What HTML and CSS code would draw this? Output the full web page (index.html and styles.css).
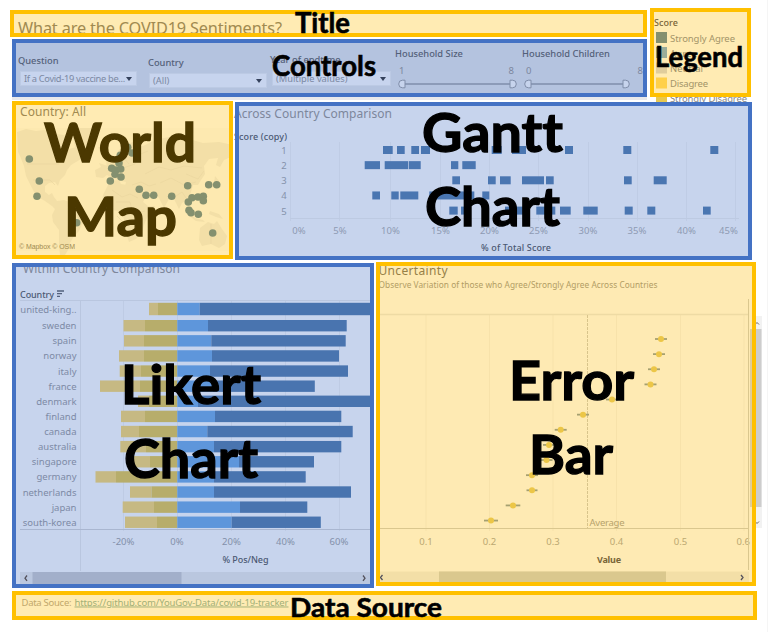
FILE: index.html
```html
<!DOCTYPE html>
<html lang="en">
<head>
<meta charset="utf-8">
<title>COVID19 Sentiments dashboard layout</title>
<link rel="stylesheet" href="styles.css">
</head>
<body>
<main class="page">
  <div class="row top">
    <div class="heading">
      <section class="panel yellow title">
        <svg class="art" viewBox="10 10 637 27"><text x="18" y="33.5" class="t16 tan" textLength="264">What are the COVID19 Sentiments?</text></svg>
        <svg class="caption small" viewBox="10 10 637 27"><text x="295" y="33" font-size="28" textLength="55" lengthAdjust="spacingAndGlyphs">Title</text></svg>
      </section>
      <section class="panel blue controls">
        <div class="control question"><label>Question</label><div class="select"><span>If a Covid-19 vaccine be...</span><i></i></div></div>
        <div class="control country"><label>Country</label><div class="select"><span>(All)</span><i></i></div></div>
        <div class="control year"><label>Year of endtime</label><div class="select"><span>(Multiple values)</span><i></i></div></div>
        <div class="control size"><label>Household Size</label><div class="ends"><span>1</span><span>8</span></div>
          <svg class="slider" viewBox="0 0 124 10"><path d="M10 5H115" class="track"/><path d="M10 1.2v7.6H7.5a3.8 3.8 0 0 1 0-7.6zM115 1.2v7.6h2.5a3.8 3.8 0 0 0 0-7.6z" class="knob"/></svg></div>
        <div class="control children"><label>Household Children</label><div class="ends"><span>0</span><span>8</span></div>
          <svg class="slider" viewBox="0 0 124 10"><path d="M10 5H102" class="track"/><path d="M10 1.2v7.6H7.5a3.8 3.8 0 0 1 0-7.6zM102 1.2v7.6h2.5a3.8 3.8 0 0 0 0-7.6z" class="knob"/></svg></div>
        <svg class="caption small" viewBox="12 39 635 58"><text x="272" y="75.500" font-size="28.500" textLength="104" lengthAdjust="spacingAndGlyphs">Controls</text></svg>
      </section>
    </div>
    <section class="panel yellow legend">
      <svg class="art" viewBox="650 8 101 89">
        <text x="654" y="26" class="semi brown" font-size="9" textLength="24">Score</text>
        <g font-size="9.500" fill="#a39468">
          <rect x="656" y="32" width="11" height="11" fill="#85906f"/><text x="670" y="41.500" textLength="65">Strongly Agree</text>
          <rect x="656" y="47" width="11" height="11" fill="#9bad99"/><text x="670" y="56.500" textLength="27">Agree</text>
          <rect x="656" y="62.500" width="11" height="11" fill="#e0cd9c"/><text x="670" y="71.500" textLength="33">Neutral</text>
          <rect x="656" y="77.500" width="11" height="11" fill="#ffd04a"/><text x="670" y="87" textLength="38">Disagree</text>
          <rect x="656" y="93" width="11" height="9" fill="#e8c84e"/><text x="670" y="102" fill="#858585" textLength="77">Strongly Disagree</text>
        </g>
      </svg>
      <svg class="caption small" viewBox="650 8 101 89"><text x="655" y="66.500" font-size="28.500" textLength="88" lengthAdjust="spacingAndGlyphs">Legend</text></svg>
    </section>
  </div>
  <div class="row middle">
    <section class="panel yellow map">
      <svg class="art" viewBox="12 101 221 158">
        <text x="20" y="116" class="tan" font-size="12" textLength="66">Country: All</text>
        <rect x="16" y="128" width="213" height="123" fill="#fde9b0"/>
        <g class="land">
          <path d="M17 132l9-3 10 2 8-1 12 4 8 1 6 6-5 3 4 5 7-2 5 7 2 4-7 4-5 3-4 5-2 5-5 5-2 6-3-4-6 1-4 3 0 6 4 3 3-2 2 4 3 4 7-1 10 4 3 6 8 3 1 5-4 6-3 7-5 5-4 7-2 7-3 5-5 0-1-10 0-15-6-8-1-7 3-6-3-3-7-5-9-5-4-8-6-12-2-10-4-10-2-4z"/>
          <path d="M65 130l12-2h17l6 3-5 8-7 5-8 7-5-4-2-9zM98 147l7 0 1 4-6 1z"/>
          <path d="M108 166l5-3 4-6 1-6 6-6 9-3 10 4 12-6 14-3 20 2 14 4 16-1 14 3v11l-9 4-4 7-4-2 2-7-9 1-5 7 1 8-4 6-3 5-5 0-2 7-3 7-6 4-3 6-3-6-3-6-4 2-5 9-5-10-4-6-9 0-5-5 5 9-3 6-8 5-7-13-3-8 1-4-8-2-6-2-5-3-4 3-7-1-1-7 6-3-2-4z"/>
          <path d="M110 181l9-1 2 4 12 2 6 5 4 11 5 4 7 0-8 12-3 7-2 7-6 7-7 3-4-12-1-11-4-8-11-1-7-7 1-8 4-8z"/>
          <path d="M200 228l8-6 6 2 3-3 5 8 5 7-2 8-6 4-8-4-9 2-3-6zM188 211l7 7 8 2 2 2-9-1-8-6zM210 211l9 3 4 5-7-2-7-3zM106 160l4 0 2 7-5 2zM215 176l4 5-2 4-3-2zM151 217l2 4-3 6-2-5z"/>
        </g>
        <path class="borders" d="M27 164h32M33 180h17l5 5M80 206l-3 9 6 9M112 190l10 7 8-3 8 4M116 202h14l3 12 12-3M123 168l12-4 3-9 10-4M145 174l14-7 12 3 13-4 18 2M160 183l11-5 13 7 12-3M132 185l9-3 8 4 7-2M176 196l6-4 4 6M211 224v20M117 216l8 8 13-1M122 156l7 8M186 174l12 5 6-8M78 222l-7-6 0-8"/>
        <g id="places" fill="#84906f"></g>
        <text x="19" y="248.500" font-size="7" class="tan arial" textLength="56">© Mapbox © OSM</text>
      </svg>
      <svg class="caption umber" viewBox="12 101 221 158"><text x="44" y="162" font-size="54" textLength="152" lengthAdjust="spacingAndGlyphs">World</text><text x="64" y="235.500" font-size="54" textLength="113" lengthAdjust="spacingAndGlyphs">Map</text></svg>
    </section>
    <section class="panel blue gantt">
      <svg class="art" viewBox="235 102 517 158">
        <text x="234" y="117.500" fill="#7d879c" font-size="12" textLength="158">Across Country Comparison</text>
        <text x="234" y="139.500" class="semi slate" font-size="9" textLength="53">Score (copy)</text>
        <g id="gantt" font-size="9.500"></g>
        <text x="481" y="251" class="semi slate" font-size="9" textLength="70">% of Total Score</text>
      </svg>
      <svg class="caption" viewBox="235 102 517 158"><text x="422" y="152" font-size="54" textLength="141" lengthAdjust="spacingAndGlyphs">Gantt</text><text x="425" y="226" font-size="54" textLength="135" lengthAdjust="spacingAndGlyphs">Chart</text></svg>
    </section>
  </div>
  <div class="row bottom">
    <section class="panel blue likert">
      <svg class="art" viewBox="12 263 362 325">
        <text x="23" y="273" fill="#7d879c" font-size="12" textLength="157">Within Country Comparison</text>
        <text x="20" y="297.500" class="semi slate" font-size="9" textLength="34">Country</text>
        <path d="M57 291h7M57 293.700h5M57 296.400h3" stroke="#53617d" stroke-width="1.300"/>
        <g id="likert" font-size="9.500"></g>
        <text x="222.500" y="563" class="semi slate" font-size="9" textLength="46">% Pos/Neg</text>
        <path fill="#bac7df" d="M20 572h350v12H20z"/><path fill="#a2afca" d="M32.500 572h149v12h-149z"/>
        <path d="M27 575.500l-2 2.700 2 2.700M363 575.500l2 2.700-2 2.700" class="chev"/>
      </svg>
      <svg class="caption" viewBox="12 263 362 325"><text x="121" y="404" font-size="54" textLength="140" lengthAdjust="spacingAndGlyphs">Likert</text><text x="124" y="477.500" font-size="54" textLength="134" lengthAdjust="spacingAndGlyphs">Chart</text></svg>
    </section>
    <section class="panel yellow error">
      <svg class="art" viewBox="376 262 380 324">
        <path fill="#f2f2f2" d="M750 316h12v212h-12z"/><path fill="#cdcdcd" d="M750 329h11.500v178H750z"/>
        <path fill="#feeab3" d="M376 262h380v324H376z"/><path fill="#dfcd98" d="M750 329h6v178h-6z"/>
        <path d="M755 324.500l2-2 2 2M755 521.500l2 2 2-2" fill="none" stroke="#666"/>
        <text x="378.500" y="274.500" fill="#968047" font-size="12" textLength="69">Uncertainty</text>
        <text x="378.500" y="288" fill="#b29d64" font-size="8.300" textLength="279">Observe Variation of those who Agree/Strongly Agree Across Countries</text>
        <g id="error" font-size="9.500"></g>
        <text x="589.500" y="525.500" fill="#b7a36c" font-size="9.500" textLength="35">Average</text>
        <text x="597" y="562.500" class="bold brown" font-size="9" textLength="24">Value</text>
        <path fill="#f3dfa7" d="M380 571.500h369v11H380z"/><path fill="#dac88e" d="M439 571.500h227v11H439z"/>
        <path d="M382.500 575l-2 2.500 2 2.500M741 575l2 2.500-2 2.500" class="chev"/>
      </svg>
      <svg class="caption" viewBox="376 262 380 324"><text x="509" y="400" font-size="54" textLength="125" lengthAdjust="spacingAndGlyphs">Error</text><text x="529" y="473.500" font-size="54" textLength="84" lengthAdjust="spacingAndGlyphs">Bar</text></svg>
    </section>
  </div>
  <footer class="panel yellow source">
    <svg class="art" viewBox="12 591 745 29"><text x="21.500" y="605.500" fill="#c2a86b" font-size="9.500" textLength="50">Data Souce:</text><a href="https://github.com/YouGov-Data/covid-19-tracker"><text x="74.500" y="605.500" fill="#a2b077" font-size="9.500" textLength="214" text-decoration="underline">https://github.com/YouGov-Data/covid-19-tracker</text></a></svg>
    <svg class="caption small" viewBox="12 591 745 29"><text x="290" y="617" font-size="27" textLength="152" lengthAdjust="spacingAndGlyphs">Data Source</text></svg>
  </footer>
</main>
<script src="charts.js"></script>
</body>
</html>
```
FILE: styles.css
```css
* { box-sizing: border-box; }
body { margin: 0; background: #fff; font-family: "Noto Sans", "Open Sans", sans-serif; }
.page { width: 768px; height: 632px; padding: 8px 0 0 12px; border-right: 1px solid #f5f5f5; overflow: hidden; }
.row { display: flex; align-items: flex-start; }
.panel { position: relative; }
.panel::after { content: ""; position: absolute; inset: 0; border: 4px solid; pointer-events: none; }
.yellow { background: #ffebb3; }
.yellow::after { border-color: #ffc000; }
.blue { background: #c7d4ed; }
.blue::after { border-color: #4472c4; }
.art { display: block; width: 100%; height: 100%; overflow: visible; }
.caption { position: absolute; inset: 0; width: 100%; height: 100%; z-index: 2; overflow: visible; font-family: Lato, sans-serif; font-weight: 700; font-variant-ligatures: none; fill: #000; stroke: #000; stroke-width: 1.3px; }
.small { stroke-width: .6px; }
.umber { fill: #4b3800; stroke: #4b3800; }

.top { height: 93px; gap: 3px; }
.heading { width: 635px; padding-top: 2px; display: flex; flex-direction: column; gap: 2px; }
.title { width: 637px; height: 27px; margin-left: -2px; }
.controls { height: 58px; background: #b4c3df; box-shadow: 0 3px #e9e9eb; display: grid; grid-template-columns: 130px 122px 125px 127px 1fr; padding-left: 6px; }
.legend { width: 101px; height: 89px; }
.middle { gap: 2px; height: 161px; }
.map { width: 221px; height: 158px; }
.gantt { width: 517px; height: 158px; margin-top: 1px; }
.bottom { gap: 2px; height: 329px; }
.likert { width: 362px; height: 325px; margin-top: 1px; }
.likert .art, .title .art { overflow: hidden; clip-path: inset(4px); }
.error { width: 380px; height: 324px; }
.source { width: 745px; height: 29px; }

.control label { display: block; font-size: 9.3px; line-height: 12px; font-weight: 500; color: #536079; white-space: nowrap; }
.question { padding-top: 16px; }
.country { padding-top: 18px; }
.year { padding-top: 15px; }
.size, .children { padding-top: 9px; }
.select { display: flex; align-items: center; justify-content: space-between; width: 117px; height: 15px; margin: 4px 0 0 2px; padding: 0 4px 0 3px; background: #c7d4ee; border: 1px solid #bccae4; font-size: 9.3px; line-height: 12px; color: #7c89a3; white-space: nowrap; }
.country .select { width: 118px; margin-left: 1px; }
.year .select { width: 119px; margin-top: 5px; }
.select i { border: 3px solid transparent; border-top: 4px solid #34415c; border-bottom: 0; }
.question .select span { letter-spacing: -.33px; }
.ends { display: flex; justify-content: space-between; width: 119px; margin-top: 4px; padding: 0 0 0 4px; font-size: 9.5px; line-height: 14px; color: #7c879e; }
.children .ends { width: 121px; }
.slider { display: block; width: 124px; height: 10px; margin-top: 1px; }
.children .slider { margin-left: -1px; }
.track { stroke: #8c9bb8; stroke-width: 2; }
.knob { fill: #c7d4ed; stroke: #7f8da9; }

.t16 { font-size: 16.3px; }
.tan { fill: #a18a50; }
.brown { fill: #796538; }
.slate { fill: #4b5973; }
.semi { font-weight: 500; }
.bold { font-weight: 700; }
.arial { font-family: "Liberation Sans", sans-serif; }
.chev { fill: none; stroke: #53515b; stroke-width: 1.3; }
.land { fill: #f3dfa7; }
.borders { fill: none; stroke: #e9d59d; stroke-width: .6; }
```
FILE: charts.js
```js
const NS = "http://www.w3.org/2000/svg";
function add(id, tag, attrs, text) {
  const el = document.createElementNS(NS, tag);
  for (const k in attrs) el.setAttribute(k, attrs[k]);
  if (text !== undefined) el.textContent = text;
  document.getElementById(id).appendChild(el);
}
const bar = (id, x1, x2, y, h, fill) => add(id, "rect", { x: x1, y, width: x2 - x1, height: h, fill });
const line = (id, d, stroke, extra) => add(id, "path", { d, stroke, fill: "none", ...extra });
const label = (id, x, y, fill, text, anchor = "middle") => add(id, "text", { x, y, fill, "text-anchor": anchor }, text);

// Survey locations on the map
[[29.3,159],[39.3,181],[37,196.3],[76.7,222.7],[127.7,147.3],[132,153],[120.3,155.3],[119,163],[111.7,168.3],[116,170],[120.7,169],[115,174.3],[121,177],[110.3,181],[139.3,189.3],[146,195.3],[153.7,195.3],[171.7,196.3],[187.7,185.7],[208.7,184.7],[216.7,184.7],[188.3,202],[192,197.7],[198,197],[203.3,196.3],[203.3,200.7],[189,210.3],[191,212.7],[198.3,214.3],[212.7,233]]
  .forEach(([cx, cy]) => add("places", "circle", { cx, cy, r: 3.8 }));

// Share of each score by country
[290.5,339.5,390.5,440.5,489.5,538.5,588.5,637.5,686.5,735.5].forEach(x => line("gantt", `M${x} 142V221`, "#bfcce5"));
line("gantt", "M290 218.5H739", "#bdcae2");
[[299,"0%"],[340,"5%"],[390.5,"10%"],[440.5,"15%"],[489.5,"20%"],[538.5,"25%"],[588,"30%"],[637,"35%"],[686.5,"40%"],[728.5,"45%"]]
  .forEach(([x, t]) => label("gantt", x, 233.5, "#8e9ab3", t));
[
  [[383,392.7],[397,404.7],[411.3,419],[421,430],[491.7,501.7],[512,526],[565,573],[623.3,631.3],[710.3,718.3]],
  [[364.7,380],[384.7,408],[408.7,420.7],[451,458.3],[462.3,475.7]],
  [[452.3,460],[488,495.7],[500,510.7],[522,544],[546,553.7],[624,631.7],[653.7,666.7]],
  [[372.3,380],[391.3,398.7],[400.3,418.3],[429.3,474.3],[482.3,489.3]],
  [[449.3,457.7],[461,468.7],[505,511],[516,526.7],[536.3,555.3],[560,570.7],[583.3,597.7],[624.7,632.7],[647.3,655.3],[703,710.7]]
].forEach((row, i) => {
  const y = 150 + i * 15.15;
  label("gantt", 284, y + 4, "#8592ab", i + 1);
  row.forEach(([a, b]) => bar("gantt", a, b, y - 4, 8, "#4a76b1"));
});

// Diverging bars: left end, left split, right split, right end
[123.5,177.5,231.5,285.5,339.5].forEach(x => line("likert", `M${x} 301V531`, "#becbe4"));
line("likert", "M20 300.500H370M80.500 300V571", "#b9c6df");
[
  ["united-king..",149,158,199.7,370],["sweden",123.5,145,208,346.7],["spain",124,144,211.3,345.7],["norway",119,144,212,339],
  ["italy",119.7,141,210,348],["france",100,140,213,314.8],["denmark",138,149,198,370],["finland",121,145,215,341.3],
  ["canada",121,139,207.3,352.7],["australia",120.3,146,214,341.3],["singapore",132,150,239,314],["germany",95.5,116,214,305.7],
  ["netherlands",130,151.5,214,351],["japan",122.7,154,240,307.3],["south-korea",125,157,231.7,320.8]
].forEach(([name, a, b, c, d], i) => {
  const y = i ? 325.7 + (i - 1) * 15.12 : 309, h = i ? 11.4 : 12.4;
  bar("likert", a, b, y - h / 2, h, "#c6b983");
  bar("likert", b, 177.3, y - h / 2, h, "#b7ad6b");
  bar("likert", 177.3, c, y - h / 2, h, "#5e96db");
  bar("likert", c, d, y - h / 2, h, "#4974af");
  label("likert", 76.5, y + 3.5, "#7d8aa5", name, "end");
});
line("likert", "M20 529.500H370", "#a9b6d0");
[[123.5,"-20%"],[177,"0%"],[231.5,"20%"],[285.5,"40%"],[339,"60%"]].forEach(([x, t]) => label("likert", x, 545, "#8390aa", t));

// Mean with confidence interval
[426,489.5,553,616.5,680.5,744].forEach((x, i) => {
  line("error", `M${x} 315V531`, "#f7e2aa");
  if (i < 5) label("error", x, 544.5, "#bba871", "0." + (i + 1));
});
label("error", 736.5, 544.5, "#bba871", "0.6", "start");
line("error", "M380 314.500H748", "#eedba4", { "stroke-width": 1.5 });
line("error", "M587.500 315V528", "#d8c48b", { "stroke-dasharray": "3 1" });
line("error", "M380 528.500H748.500M748.500 299V570", "#dac78e");
[[661,6],[659,6],[654,6],[650.5,6],[612,6],[583,6],[560.7,6],[549,6],[546.5,6],[532,6],[532,5.5],[513,7.3],[491,7]].forEach(([x, w], i) => {
  const y = 339 + i * 15.13;
  line("error", `M${x - w} ${y}h${2 * w}`, "#a6a070", { "stroke-width": 1.8 });
  add("error", "circle", { cx: x, cy: y, r: 3, fill: "#ecc647" });
});
```
